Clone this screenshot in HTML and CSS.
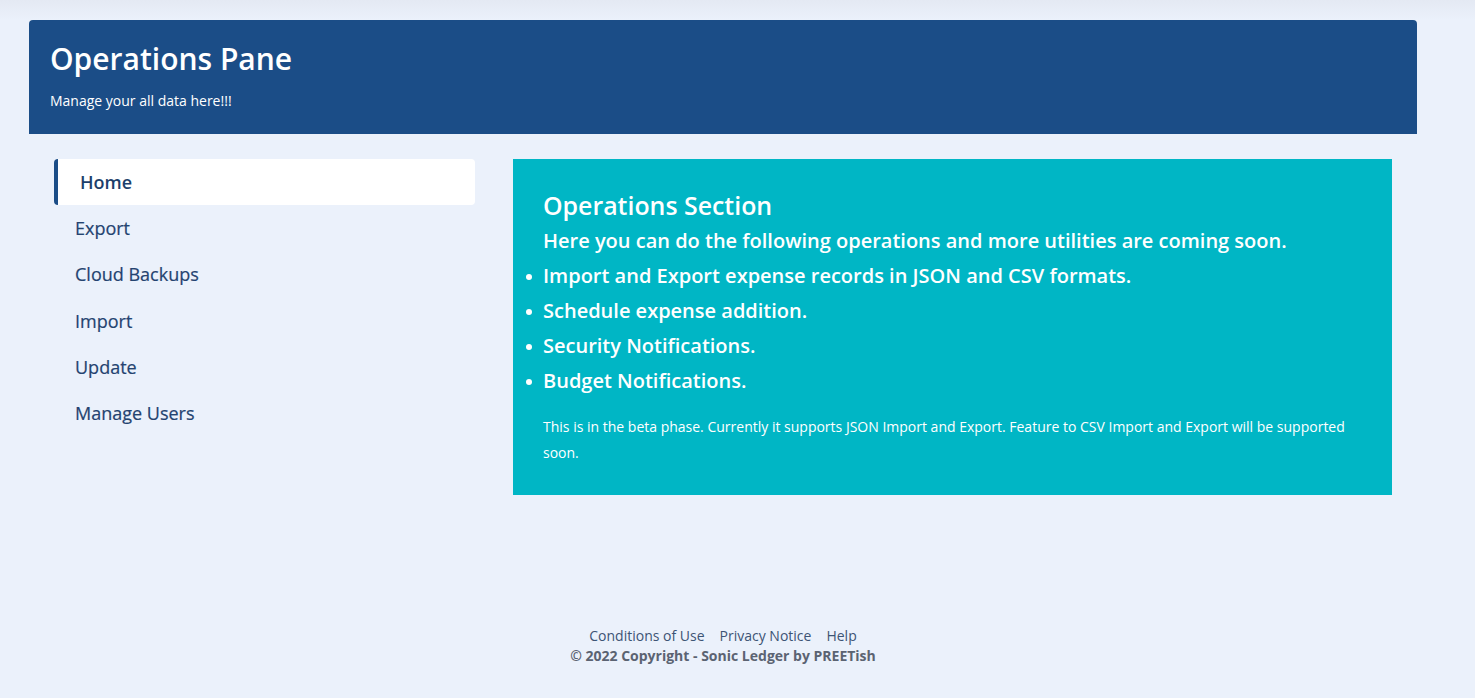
FILE: index.html
```html
<!DOCTYPE html>
<html lang="en">
<head>
<meta charset="utf-8">
<title>Operations Pane</title>
<link rel="stylesheet" href="styles.css">
</head>
<body>
<div class="page">
  <header class="banner">
    <h1 class="banner-title">Operations Pane</h1>
    <p class="banner-sub">Manage your all data here!!!</p>
  </header>
  <main class="main">
    <nav class="sidenav">
      <a class="nav-item active">Home</a>
      <a class="nav-item">Export</a>
      <a class="nav-item">Cloud Backups</a>
      <a class="nav-item">Import</a>
      <a class="nav-item">Update</a>
      <a class="nav-item">Manage Users</a>
    </nav>
    <section class="panel">
      <h2 class="panel-title">Operations Section</h2>
      <h3 class="panel-lead">Here you can do the following operations and more utilities are coming soon.</h3>
      <ul class="panel-list">
        <li>Import and Export expense records in JSON and CSV formats.</li>
        <li>Schedule expense addition.</li>
        <li>Security Notifications.</li>
        <li>Budget Notifications.</li>
      </ul>
      <p class="panel-note">This is in the beta phase. Currently it supports JSON Import and Export. Feature to CSV Import and Export will be supported soon.</p>
    </section>
  </main>
  <footer class="footer">
    <div class="footer-links">
      <a>Conditions of Use</a>
      <a>Privacy Notice</a>
      <a>Help</a>
    </div>
    <div class="footer-copy">© 2022 Copyright - Sonic Ledger by PREETish</div>
  </footer>
</div>
</body>
</html>
```
FILE: styles.css
```css
* { box-sizing: border-box; }
html, body { margin: 0; padding: 0; }
body {
  font-family: "Open Sans", "Noto Sans", sans-serif;
  background: linear-gradient(to bottom, #e4e9f3 0px, #ebf1fb 20px, #ebf1fb 100%);
  min-height: 698px;
  color: #2a4a74;
}
.page {
  width: 1446px;
  padding-top: 20px;
}
.banner {
  margin-left: 29px;
  width: 1388px;
  height: 114px;
  background: #1b4d87;
  border-radius: 4px 4px 0 0;
  padding: 20px 21px 0;
  color: #fff;
}
.banner-title {
  margin: 0;
  font-size: 30px;
  font-weight: 600;
  line-height: 38px;
}
.banner-sub {
  margin: 13px 0 0;
  font-size: 14px;
  line-height: 20px;
}
.main {
  display: flex;
  align-items: flex-start;
  padding: 25px 0 0 54px;
  gap: 38px;
}
.sidenav {
  width: 421px;
  display: flex;
  flex-direction: column;
}
.nav-item {
  display: block;
  height: 46.2px;
  line-height: 46px;
  padding-left: 21px;
  font-size: 18px;
  font-weight: 500;
  color: #244370;
  -webkit-text-stroke: 0.2px #244370;
}
.nav-item.active {
  background: #fff;
  border-left: 4px solid #1b4d87;
  border-radius: 4px;
  padding-left: 22px;
  font-weight: 600;
  color: #1d3f6b;
  -webkit-text-stroke: 0;
}
.panel {
  width: 879px;
  height: 336px;
  background: #00b6c5;
  color: #fff;
  padding: 30px 30px 0;
}
.panel-title {
  margin: 0;
  font-size: 24.9px;
  font-weight: 600;
  line-height: 32px;
}
.panel-lead {
  margin: 5px 0 0;
  font-size: 20px;
  font-weight: 600;
  line-height: 30px;
}
.panel-list {
  margin: 2px 0 0;
  padding-left: 0;
  list-style: none;
}
.panel-list li {
  position: relative;
  font-size: 20px;
  font-weight: 600;
  line-height: 35px;
}
.panel-list li::before {
  content: "";
  position: absolute;
  left: -17px;
  top: 16px;
  width: 6px;
  height: 6px;
  border-radius: 50%;
  background: #fff;
}
.panel-note {
  margin: 16px 0 0;
  font-size: 14px;
  line-height: 26px;
}
.footer {
  margin-top: 131px;
  text-align: center;
  font-size: 14px;
}
.footer-links {
  display: flex;
  justify-content: center;
  gap: 15px;
  color: #3d5475;
  line-height: 20px;
}
.footer-copy {
  font-weight: 700;
  color: #5b6372;
  line-height: 20px;
}
```
